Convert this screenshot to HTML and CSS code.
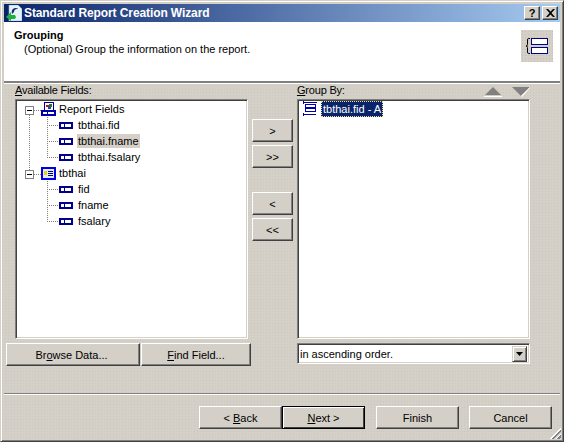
FILE: index.html
```html
<!DOCTYPE html>
<html lang="en">
<head>
    <meta charset="UTF-8">
    <title>Standard Report Creation Wizard</title>
    <link rel="stylesheet" href="styles.css">
</head>
<body>

    <svg class="defs" width="0" height="0">
        <symbol id="i-field" viewBox="0 0 16 16">
            <rect x="0" y="5" width="14" height="7" fill="#00008b"/>
            <rect x="2" y="7" width="3" height="3" fill="#fff"/>
            <rect x="6" y="7" width="6" height="3" fill="#fff"/>
        </symbol>
        <symbol id="i-report" viewBox="0 0 16 16">
            <rect x="3.500" y="1.500" width="9" height="9" fill="#fff" stroke="#00008b"/>
            <rect x="5" y="4" width="3" height="2" fill="#d01010"/>
            <rect x="8" y="3" width="3" height="3" fill="#108030"/>
            <rect x="7" y="6" width="3" height="2" fill="#2040d0"/>
            <rect x="0" y="9" width="15" height="6" fill="#0000b0"/>
            <rect x="2" y="11" width="4" height="2" fill="#fff"/>
            <rect x="7" y="11" width="6" height="2" fill="#fff"/>
        </symbol>
        <symbol id="i-table" viewBox="0 0 16 16">
            <rect x="0" y="2" width="15" height="13" fill="#0000e0"/>
            <rect x="2" y="4" width="11" height="9" fill="#dfeaff"/>
            <rect x="3" y="6" width="3" height="4" fill="#f0d000"/>
            <rect x="7" y="6" width="5" height="1" fill="#000080"/>
            <rect x="7" y="8" width="5" height="1" fill="#000080"/>
            <rect x="7" y="10" width="5" height="1" fill="#000080"/>
        </symbol>
        <symbol id="i-group" viewBox="0 0 16 16">
            <rect x="2" y="1" width="12" height="1" fill="#0000b0"/>
            <rect x="1" y="0" width="1" height="3" fill="#0000b0"/>
            <rect x="14" y="1" width="1" height="1" fill="#0000b0"/>
            <rect x="3.500" y="3.500" width="10" height="3" fill="#fff" stroke="#0000b0"/>
            <rect x="3.500" y="7.500" width="10" height="3" fill="#fff" stroke="#0000b0"/>
            <rect x="2" y="13" width="12" height="1" fill="#0000b0"/>
            <rect x="1" y="12" width="1" height="3" fill="#0000b0"/>
        </symbol>
        <symbol id="i-minus" viewBox="0 0 9 9">
            <rect x="0.500" y="0.500" width="8" height="8" fill="#fff" stroke="#808080"/>
            <rect x="2" y="4" width="5" height="1" fill="#000"/>
        </symbol>
    </svg>

    <div class="window">

        <div class="titlebar">
            <svg class="title-icon" width="16" height="16" viewBox="0 0 16 16">
                <path d="M3 0h9l4 4v12H3z" fill="#e8f2fb" stroke="#8fb0d0" stroke-width="0.6"/>
                <path d="M6 9C5 5 7 3 10 3c1.500 0 2 1 2 1-2-.5-4 .5-4 3z" fill="#103070"/>
                <path d="M0 12l5-5v3h4l1 2-1 2H5v2z" fill="#20b040"/>
            </svg>
            <span class="title-text">Standard Report Creation Wizard</span>
            <div class="title-buttons">
                <button class="cap-btn">?</button>
                <button class="cap-btn cap-close">
                    <svg width="9" height="8" viewBox="0 0 9 8"><path d="M0 0h2l2.500 2.500L7 0h2L5.500 4 9 8H7L4.500 5.500 2 8H0l3.500-4z" fill="#000"/></svg>
                </button>
            </div>
        </div>

        <div class="header">
            <div>
                <div class="header-title">Grouping</div>
                <div class="header-sub">(Optional) Group the information on the report.</div>
            </div>
            <div class="header-icon">
                <svg width="32" height="32" viewBox="0 0 32 32">
                    <path d="M9 8.500H7.500Q6.500 8.500 6.500 10v4.500q0 1.500-1.500 1.500 1.500 0 1.500 1.500V22q0 1.500 1 1.500H9" fill="none" stroke="#000"/>
                    <rect x="10.500" y="8.500" width="16" height="6" fill="#fff" stroke="#00008b"/>
                    <rect x="10.500" y="17.500" width="16" height="6" fill="#fff" stroke="#00008b"/>
                </svg>
            </div>
        </div>

        <div class="main">
            <div class="col-left">
                <div class="field-label"><u>A</u>vailable Fields:</div>
                <div class="listbox tree">
                    <div class="row">
                        <svg class="guide guide-root" viewBox="0 0 24 16"><path d="M12.500 14v2M17 9.500h7" class="dots"/><use href="#i-minus" x="8" y="5" width="9" height="9"/></svg>
                        <svg class="icon"><use href="#i-report"/></svg>
                        <span class="label">Report Fields</span>
                    </div>
                    <div class="row">
                        <svg class="guide guide-child" viewBox="0 0 42 16"><path d="M12.500 0v16M30.500 0v16M30 8.500h11" class="dots"/></svg>
                        <svg class="icon"><use href="#i-field"/></svg>
                        <span class="label child">tbthai.fid</span>
                    </div>
                    <div class="row">
                        <svg class="guide guide-child" viewBox="0 0 42 16"><path d="M12.500 0v16M30.500 0v16M30 8.500h11" class="dots"/></svg>
                        <svg class="icon"><use href="#i-field"/></svg>
                        <span class="label child picked">tbthai.fname</span>
                    </div>
                    <div class="row">
                        <svg class="guide guide-child" viewBox="0 0 42 16"><path d="M12.500 0v16M30.500 0v8M30 8.500h11" class="dots"/></svg>
                        <svg class="icon"><use href="#i-field"/></svg>
                        <span class="label child">tbthai.fsalary</span>
                    </div>
                    <div class="row">
                        <svg class="guide guide-root" viewBox="0 0 24 16"><path d="M12.500 0v5M17 9.500h7" class="dots"/><use href="#i-minus" x="8" y="5" width="9" height="9"/></svg>
                        <svg class="icon"><use href="#i-table"/></svg>
                        <span class="label">tbthai</span>
                    </div>
                    <div class="row">
                        <svg class="guide guide-child" viewBox="0 0 42 16"><path d="M30.500 0v16M30 8.500h11" class="dots"/></svg>
                        <svg class="icon"><use href="#i-field"/></svg>
                        <span class="label child">fid</span>
                    </div>
                    <div class="row">
                        <svg class="guide guide-child" viewBox="0 0 42 16"><path d="M30.500 0v16M30 8.500h11" class="dots"/></svg>
                        <svg class="icon"><use href="#i-field"/></svg>
                        <span class="label child">fname</span>
                    </div>
                    <div class="row">
                        <svg class="guide guide-child" viewBox="0 0 42 16"><path d="M30.500 0v8M30 8.500h11" class="dots"/></svg>
                        <svg class="icon"><use href="#i-field"/></svg>
                        <span class="label child">fsalary</span>
                    </div>
                </div>
                <div class="left-buttons">
                    <button class="btn btn-browse">Br<u>o</u>wse Data...</button>
                    <button class="btn btn-find"><u>F</u>ind Field...</button>
                </div>
            </div>

            <div class="col-mid">
                <button class="btn btn-move">&gt;</button>
                <button class="btn btn-move">&gt;&gt;</button>
                <button class="btn btn-move btn-gap">&lt;</button>
                <button class="btn btn-move">&lt;&lt;</button>
            </div>

            <div class="col-right">
                <div class="group-head">
                    <div class="field-label"><u>G</u>roup By:</div>
                    <div class="arrows">
                        <svg width="18" height="10" viewBox="0 0 18 10"><path d="M9 0l8 8H1z" fill="#808080"/><path d="M0 9h18v1H0z" fill="#fff"/></svg>
                        <svg width="18" height="10" viewBox="0 0 18 10"><path d="M0 0h18l-9 9z" fill="#808080"/><path d="M18 0l-9 9 1 1 9-10z" fill="#fff"/></svg>
                    </div>
                </div>
                <div class="listbox">
                    <div class="row group-row">
                        <svg class="icon"><use href="#i-group"/></svg>
                        <span class="focused">tbthai.fid - A</span>
                    </div>
                </div>
                <div class="combo">
                    <span class="combo-text">in ascending order.</span>
                    <button class="combo-btn">
                        <svg width="7" height="4" viewBox="0 0 7 4"><path d="M0 0h7L3.500 4z" fill="#000"/></svg>
                    </button>
                </div>
            </div>
        </div>

        <div class="footer">
            <button class="btn btn-nav">&lt; <u>B</u>ack</button>
            <button class="btn btn-nav btn-default"><u>N</u>ext &gt;</button>
            <button class="btn btn-nav btn-finish">Finish</button>
            <button class="btn btn-nav btn-cancel">Cancel</button>
        </div>

        <div class="grip"></div>
    </div>

</body>
</html>
```

FILE: styles.css
```css
html, body {
    margin: 0;
    padding: 0;
}

body {
    font-family: "Liberation Sans", Arial, sans-serif;
    font-size: 11px;
    color: #000;
}

.defs {
    display: block;
    height: 0;
}

button {
    font-family: inherit;
    font-size: 11px;
    color: #000;
    margin: 0;
    padding: 0;
}

.window {
    position: relative;
    box-sizing: border-box;
    width: 564px;
    height: 442px;
    display: flex;
    flex-direction: column;
    padding: 3px;
    border: 1px solid;
    border-color: #d4d0c8 #404040 #404040 #d4d0c8;
    box-shadow: inset 1px 1px #fff, inset -1px -1px #808080;
    background-color: #d4d0c8;
    background-image: radial-gradient(#cbc7bf 0.5px, transparent 0.7px);
    background-size: 3px 3px;
}

/* Title bar */
.titlebar {
    height: 18px;
    display: flex;
    align-items: center;
    padding-left: 2px;
    background: linear-gradient(to right, #0a246a, #a6caf0);
}

.title-icon {
    flex: none;
}

.title-text {
    margin-left: 2px;
    font-size: 12px;
    letter-spacing: -0.1px;
    font-weight: bold;
    color: #fff;
}

.title-buttons {
    margin-left: auto;
    display: flex;
    gap: 2px;
    padding-right: 2px;
}

.cap-btn {
    width: 16px;
    height: 14px;
    display: flex;
    align-items: center;
    justify-content: center;
    font-weight: bold;
    background: #d4d0c8;
    border: 1px solid;
    border-color: #fff #404040 #404040 #fff;
    box-shadow: inset -1px -1px #808080;
}

/* Header */
.header {
    box-sizing: border-box;
    height: 61px;
    flex: none;
    display: flex;
    justify-content: space-between;
    padding: 7px 7px 0 10px;
    background: #fff;
    border-bottom: 2px solid;
    border-color: #808080;
    box-shadow: 0 1px #fff;
}

.header-title {
    font-weight: bold;
    line-height: 13px;
}

.header-sub {
    margin-left: 10px;
    line-height: 14px;
}

.header-icon {
    width: 32px;
    height: 32px;
    margin-top: 1px;
    background-color: #d4d0c8;
    background-image: radial-gradient(#c4c0b8 0.5px, transparent 0.7px);
    background-size: 3px 3px;
}

/* Main area */
.main {
    height: 310px;
    flex: none;
    display: flex;
    padding-left: 2px;
    box-sizing: border-box;
}

.col-left {
    width: 245px;
}

.field-label {
    height: 16px;
    line-height: 14px;
    margin-left: 9px;
    letter-spacing: -0.2px;
}

.listbox {
    box-sizing: border-box;
    width: 233px;
    height: 240px;
    background: #fff;
    border: 1px solid;
    border-color: #808080 #fff #fff #808080;
    box-shadow: inset 1px 1px #404040, inset -1px -1px #d4d0c8;
    padding: 1px;
}

.tree {
    margin-left: 9px;
}

.row {
    height: 16px;
    display: flex;
    align-items: center;
}

.guide {
    flex: none;
    height: 16px;
}

.guide-root {
    width: 24px;
}

.guide-child {
    width: 42px;
}

.dots {
    fill: none;
    stroke: #808080;
    stroke-dasharray: 1 1;
}

.icon {
    flex: none;
    width: 16px;
    height: 16px;
}

.label {
    margin-left: 1px;
    padding: 0 1px;
    line-height: 14px;
    white-space: nowrap;
}

.label.child {
    margin-left: 2px;
}

.picked {
    background: #d4d0c8;
}

.left-buttons {
    display: flex;
    gap: 1px;
    margin-top: 4px;
}

/* Buttons */
.btn {
    box-sizing: border-box;
    height: 23px;
    background: #d4d0c8;
    border: 1px solid;
    border-color: #fff #404040 #404040 #fff;
    box-shadow: inset -1px -1px #808080;
}

.btn-browse {
    width: 134px;
    padding-right: 3px;
}

.btn-find {
    width: 110px;
}

.col-mid {
    width: 41px;
    margin-left: 1px;
    padding-top: 36px;
    display: flex;
    flex-direction: column;
    gap: 3px;
}

.btn-move {
    width: 41px;
    flex: none;
}

.btn-gap {
    margin-top: 21px;
}

.col-right {
    width: 233px;
    margin-left: 4px;
}

.group-head {
    height: 16px;
    display: flex;
    justify-content: space-between;
}

.group-head .field-label {
    margin-left: 0;
}

.arrows {
    display: flex;
    gap: 10px;
    padding-top: 4px;
}

.group-row {
    padding-left: 3px;
}

.focused {
    margin-left: 3px;
    padding: 1px 2px;
    line-height: 14px;
    color: #fff;
    background: #0a246a;
    outline: 1px dotted #f0e0a0;
    outline-offset: -1px;
}

.combo {
    box-sizing: border-box;
    width: 233px;
    height: 21px;
    margin-top: 4px;
    display: flex;
    align-items: center;
    background: #fff;
    border: 1px solid;
    border-color: #808080 #fff #fff #808080;
    box-shadow: inset 1px 1px #404040, inset -1px -1px #d4d0c8;
    padding: 2px;
}

.combo-text {
    flex: 1;
}

.combo-btn {
    width: 15px;
    height: 16px;
    display: flex;
    align-items: center;
    justify-content: center;
    background: #d4d0c8;
    border: 1px solid;
    border-color: #d4d0c8 #404040 #404040 #d4d0c8;
    box-shadow: inset 1px 1px #fff, inset -1px -1px #808080;
}

/* Footer */
.footer {
    flex: 1;
    display: flex;
    justify-content: flex-end;
    padding: 12px 8px 0 0;
    border-top: 1px solid #808080;
    box-shadow: inset 0 1px #fff;
}

.btn-nav {
    width: 83px;
}

.btn-default {
    border-color: #000;
    box-shadow: inset 1px 1px #fff, inset -1px -1px #404040;
}

.btn-finish {
    margin-left: 11px;
}

.btn-cancel {
    margin-left: 10px;
}

/* resize corner */
.grip {
    position: absolute;
    right: 2px;
    bottom: 2px;
    width: 12px;
    height: 12px;
    background: repeating-linear-gradient(135deg, #d4d0c8 0 1px, #fff 1px 2px, #808080 2px 4px);
    clip-path: polygon(100% 0, 100% 100%, 0 100%);
}
```
